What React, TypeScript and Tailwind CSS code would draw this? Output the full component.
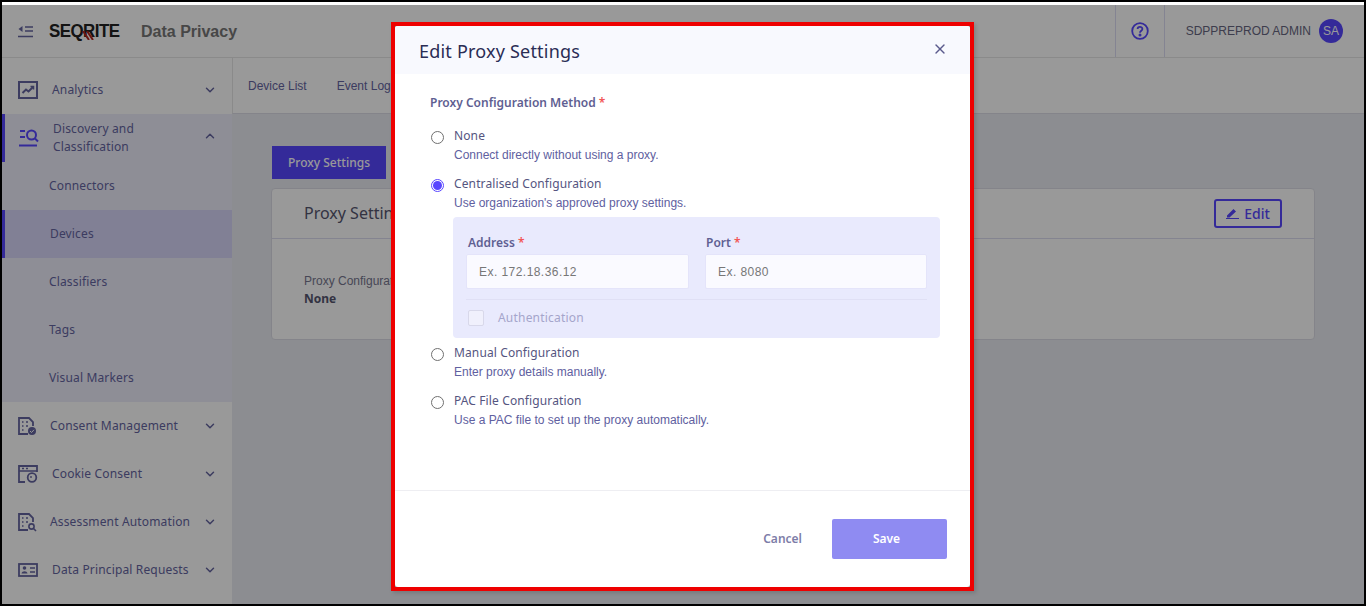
import { ChevronDown, ChevronUp, X } from 'lucide-react';
import type { ReactNode } from 'react';

const noto = "font-['Noto_Sans',sans-serif]";
const arial = "font-['Liberation_Sans',Arial,sans-serif]";

function AnalyticsIcon() {
	return (
		<svg width="20" height="18" viewBox="0 0 20 18" fill="none" stroke="#6464a0">
			<rect x="1" y="1" width="18" height="16" strokeWidth="2" />
			<path d="M4.5 12 L8 8.5 L10.5 10.5 L15 6" strokeWidth="2" />
			<path d="M12.5 5.5 H15.5 V8.5" strokeWidth="1.5" />
		</svg>
	);
}

function DiscoveryIcon() {
	return (
		<svg width="20" height="20" viewBox="0 0 20 20" fill="none" stroke="#5846ff">
			<path d="M1 3 H6 M1 9 H6 M0 17.5 H18" strokeWidth="2" />
			<circle cx="12.5" cy="7" r="4.5" strokeWidth="2" />
			<path d="M16 10.5 L19 13.5" strokeWidth="2" />
		</svg>
	);
}

function DocIcon({ badge }: { badge: 'check' | 'search' }) {
	return (
		<svg width="19" height="19" viewBox="0 0 19 19" fill="none" stroke="#6464a0">
			<path d="M10 17 H1 V1 H11 L15 5 V9" strokeWidth="1.8" />
			<path d="M4 5 H5.5 M8 5 H10 M4 9 H5.5 M8 9 H10 M4 13 H5.5" strokeWidth="1.6" />
			{badge === 'check' ? (
				<>
					<circle cx="14" cy="14" r="4" fill="#6464a0" stroke="none" />
					<path d="M12 14 L13.5 15.5 L16 12.8" stroke="#fff" strokeWidth="1" />
				</>
			) : (
				<>
					<circle cx="13.5" cy="13.5" r="2.6" strokeWidth="1.6" />
					<path d="M15.5 15.5 L18 18" strokeWidth="1.6" />
				</>
			)}
		</svg>
	);
}

function CookieIcon() {
	return (
		<svg width="20" height="18" viewBox="0 0 20 18" fill="none" stroke="#6464a0">
			<path d="M7 17 H1 V1 H19 V7" strokeWidth="1.8" />
			<path d="M1 6 H19 M4 3.5 H6 M8 3.5 H10" strokeWidth="1.6" />
			<circle cx="14" cy="12.5" r="4.3" strokeWidth="1.8" />
			<circle cx="13" cy="12" r="0.9" fill="#6464a0" stroke="none" />
		</svg>
	);
}

function IdCardIcon() {
	return (
		<svg width="20" height="14" viewBox="0 0 20 14" fill="none" stroke="#6464a0">
			<rect x="1" y="1" width="18" height="12" strokeWidth="1.8" />
			<circle cx="6.5" cy="5" r="1.8" fill="#6464a0" stroke="none" />
			<path d="M3.5 10.5 C4 7.5 9 7.5 9.5 10.5 Z" fill="#6464a0" stroke="none" />
			<path d="M12 5 H17 M12 9 H17" strokeWidth="1.6" />
		</svg>
	);
}

function NavRow({ icon, label, gap }: { icon: ReactNode; label: string; gap: string }) {
	return (
		<div className="flex h-12 items-center pl-4 pr-[15px]">
			<div className="flex w-5 shrink-0 justify-start">{icon}</div>
			<span className={`${gap} flex-1 text-[12px] tracking-[0.15px] text-[#6464a0]`}>{label}</span>
			<ChevronDown size={14} strokeWidth={2.5} className="text-[#6464a0]" />
		</div>
	);
}

function SubRow({ label, active }: { label: string; active?: boolean }) {
	return (
		<div
			className={`flex h-12 items-center text-[12px] tracking-[0.15px] text-[#6464a0] ${
				active ? 'border-l-[3px] border-[#5846ff] bg-[#d8d6f8] pl-[45px]' : 'pl-[47px]'
			}`}
		>
			{label}
		</div>
	);
}

function Sidebar() {
	return (
		<aside className={`flex w-[230px] shrink-0 flex-col overflow-hidden bg-white pt-2 ${noto}`}>
			<NavRow icon={<AnalyticsIcon />} label="Analytics" gap="ml-[14px]" />
			<div className="bg-[#ededfb]">
				<div className="flex h-12 items-center border-l-[3px] border-[#5846ff] pl-[14px] pr-[15px]">
					<div className="flex w-5 shrink-0 justify-center">
						<DiscoveryIcon />
					</div>
					<span className="ml-[14px] flex-1 text-[12px] leading-[18px] tracking-[0.15px] text-[#6464a0]">
						Discovery and
						<br />
						Classification
					</span>
					<ChevronUp size={14} strokeWidth={2.5} className="mb-[5px] text-[#6464a0]" />
				</div>
				<SubRow label="Connectors" />
				<SubRow label="Devices" active />
				<SubRow label="Classifiers" />
				<SubRow label="Tags" />
				<SubRow label="Visual Markers" />
			</div>
			<NavRow icon={<DocIcon badge="check" />} label="Consent Management" gap="ml-[12px]" />
			<NavRow icon={<CookieIcon />} label="Cookie Consent" gap="ml-[14px]" />
			<NavRow icon={<DocIcon badge="search" />} label="Assessment Automation" gap="ml-[12px]" />
			<NavRow icon={<IdCardIcon />} label="Data Principal Requests" gap="ml-[14px]" />
		</aside>
	);
}

function Header() {
	return (
		<header className="flex h-[53px] shrink-0 items-center border-b border-[#e6e6e6] bg-white pl-4">
			<svg width="15" height="13" viewBox="0 0 15 13" fill="none" stroke="#6464a0" strokeWidth="1.6">
				<path d="M7 2 H15 M7 6 H15 M0 11.5 H15" />
				<path d="M4.5 1 V7 L0.5 4 Z" fill="#6464a0" stroke="none" />
			</svg>
			<div className="relative ml-4 w-[71px]">
				<span className={`${arial} inline-block origin-left scale-x-[0.89] text-[19px] font-bold tracking-[-0.6px] text-[#222]`}>SEQRITE</span>
				<svg width="12" height="9" viewBox="0 0 12 9" className="absolute left-[33px] top-[14px]" fill="none" stroke="#b3261e" strokeWidth="2">
					<path d="M1 0 L7 9 M5 0 L11 9" />
				</svg>
			</div>
			<span className={`${arial} ml-[21px] mt-[2px] text-[16px] font-bold text-[#777]`}>Data Privacy</span>
			<div className="ml-auto flex h-full items-center">
				<div className="flex h-full w-[50px] items-center justify-center border-x border-[#dcdcf4]">
					<svg width="18" height="18" viewBox="0 0 18 18" fill="none" stroke="#5846ff" strokeWidth="1.8">
						<circle cx="9" cy="9" r="7.8" />
						<path d="M6.6 7 C6.6 4.2 11.4 4.2 11.4 7 C11.4 8.8 9 8.8 9 10.8" />
						<circle cx="9" cy="13" r="0.6" fill="#5846ff" />
					</svg>
				</div>
				<span className={`${arial} ml-[21px] text-[12px] text-[#666680]`}>SDPPREPROD ADMIN</span>
				<div className={`${arial} ml-2 mr-[21px] flex h-6 w-6 items-center justify-center rounded-full bg-[#5846ff] text-[12px] text-white`}>
					SA
				</div>
			</div>
		</header>
	);
}

function Content() {
	return (
		<main className="flex min-w-0 flex-1 flex-col bg-[#e9ebf2]">
			<div className={`${arial} flex h-[56px] shrink-0 items-center gap-[30px] border-b border-[#dddde6] border-l border-l-[#e6e6e6] bg-white pl-[15px] text-[12px] text-[#6464a0]`}>
				<span>Device List</span>
				<span>Event Log</span>
			</div>
			<div className="flex flex-1 flex-col pl-[39px] pr-[49px] pt-8">
				<div className={`${noto} ml-px flex h-[33px] w-[114px] items-center justify-center bg-[#5846ff] text-[12px] font-medium text-white`}>
					Proxy Settings
				</div>
				<div className="mt-[9px] h-[152px] rounded border border-[#dddde6] bg-white">
					<div className="flex h-[50px] items-center justify-between border-b border-[#dcdcf0] pl-8 pr-8">
						<span className={`${noto} mb-[2px] text-[16px] text-[#55556f]`}>Proxy Settings</span>
						<div className={`${noto} flex h-[29px] w-[68px] items-center justify-center gap-[5px] rounded-[3px] border-2 border-[#5846ff] text-[14px] font-medium text-[#5846ff]`}>
							<svg width="13" height="12" viewBox="0 0 13 12" fill="#5846ff" className="mb-[2px]">
								<path d="M1 8.5 L7.5 2 L10 4.5 L3.5 10.5 H1 Z M0 11 H13 V12 H0 Z" />
							</svg>
							Edit
						</div>
					</div>
					<div className={`pl-8 pt-[33px] text-[12px] leading-[18px] text-[#77778f]`}>
						<div className={arial}>Proxy Configuration Method</div>
						<div className={`${noto} font-bold text-[#55556f]`}>None</div>
					</div>
				</div>
			</div>
		</main>
	);
}

function RadioOption({ label, hint, checked }: { label: string; hint: string; checked?: boolean }) {
	return (
		<div className="flex h-[38px]">
			<div className="w-[24px] shrink-0 pl-[1px] pt-[5px]">
				{checked ? (
					<div className="flex h-[13px] w-[13px] items-center justify-center rounded-full border border-[#5846ff]">
						<div className="h-[9px] w-[9px] rounded-full bg-[#5846ff]" />
					</div>
				) : (
					<div className="h-[13px] w-[13px] rounded-full border border-[#707070]" />
				)}
			</div>
			<div>
				<div className={`${noto} text-[12px] leading-5 tracking-[0.12px] text-[#55557f]`}>{label}</div>
				<div className={`${arial} text-[12px] leading-[18px] text-[#6060a0]`}>{hint}</div>
			</div>
		</div>
	);
}

function Field({
	label,
	placeholder,
	className,
	labelPad
}: {
	label: string;
	placeholder: string;
	className: string;
	labelPad: string;
}) {
	return (
		<div className={className}>
			<div className={`${noto} ${labelPad} text-[12px] font-semibold leading-4 text-[#5f5f92]`}>
				{label} <span className="text-[#f25555]">*</span>
			</div>
			<div className={`${arial} mt-[3px] flex h-[35px] items-center rounded-[2px] border border-[#e4e4fa] bg-[#fafaff] pl-3 text-[12px] tracking-[0.45px] text-[#777]`}>
				{placeholder}
			</div>
		</div>
	);
}

function ProxyModal() {
	return (
		<div className="absolute left-[389px] top-[17px] flex h-[569px] w-[583px] flex-col border-4 border-[#ee0000] bg-[#8f8f92] shadow-[2px_2px_4px_rgba(0,0,0,0.15)]">
			<div className="flex min-h-0 flex-1 flex-col overflow-hidden rounded-[3px] bg-white">
				<div className={`${noto} flex h-[48px] shrink-0 items-center justify-between bg-[#f8f9fe] pl-6 pr-[22px] pt-[2px]`}>
					<span className="text-[18px] tracking-[0.2px] text-[#2a2d55]">Edit Proxy Settings</span>
					<X size={16} strokeWidth={2} className="mb-1 text-[#5a5a8c]" />
				</div>
				<div className="flex-1 pl-[35px] pr-[30px] pt-5">
					<div className={`${noto} text-[12px] font-semibold leading-[18px] text-[#5f5f92]`}>
						Proxy Configuration Method <span className="text-[#f25555]">*</span>
					</div>
					<div className="mt-[14px]">
						<RadioOption label="None" hint="Connect directly without using a proxy." />
					</div>
					<div className="mt-[10px]">
						<RadioOption checked label="Centralised Configuration" hint="Use organization's approved proxy settings." />
					</div>
					<div className="ml-[23px] mt-[5px] h-[121px] rounded bg-[#e9eafd] px-[13px] pt-[18px]">
						<div className="flex gap-4">
							<Field label="Address" labelPad="pl-[2px]" placeholder="Ex. 172.18.36.12" className="w-[223px]" />
							<Field label="Port" labelPad="pl-[1px]" placeholder="Ex. 8080" className="flex-1" />
						</div>
						<div className="mt-[10px] flex h-[36px] items-center border-t border-[#e0e0f5] pl-[2px]">
							<div className="h-4 w-4 rounded-[2px] border border-[#d8d8ea] bg-[#f0f0fc]" />
							<span className={`${noto} ml-[14px] text-[12px] tracking-[0.2px] text-[#a5a5cb]`}>Authentication</span>
						</div>
					</div>
					<div className="mt-[5px]">
						<RadioOption label="Manual Configuration" hint="Enter proxy details manually." />
					</div>
					<div className="mt-[10px]">
						<RadioOption label="PAC File Configuration" hint="Use a PAC file to set up the proxy automatically." />
					</div>
				</div>
				<div className={`${noto} flex h-[97px] shrink-0 items-center justify-end gap-[30px] border-t border-[#eeeef2] pr-[23px] text-[12px] font-semibold`}>
					<span className="text-[#7d7da8]">Cancel</span>
					<div className="flex h-10 w-[115px] items-center justify-center rounded-[2px] bg-[#8f8bf2] pr-[6px] text-white">Save</div>
				</div>
			</div>
		</div>
	);
}

export default function App() {
	return (
		<div className="flex h-[606px] w-[1366px] flex-col overflow-hidden border-2 border-black bg-white">
			<div className="h-[3px] shrink-0 bg-white" />
			<div className="relative flex min-h-0 flex-1 flex-col">
				<Header />
				<div className="flex min-h-0 flex-1">
					<Sidebar />
					<Content />
				</div>
				<div className="absolute inset-0 bg-black/40" />
				<ProxyModal />
			</div>
		</div>
	);
}
